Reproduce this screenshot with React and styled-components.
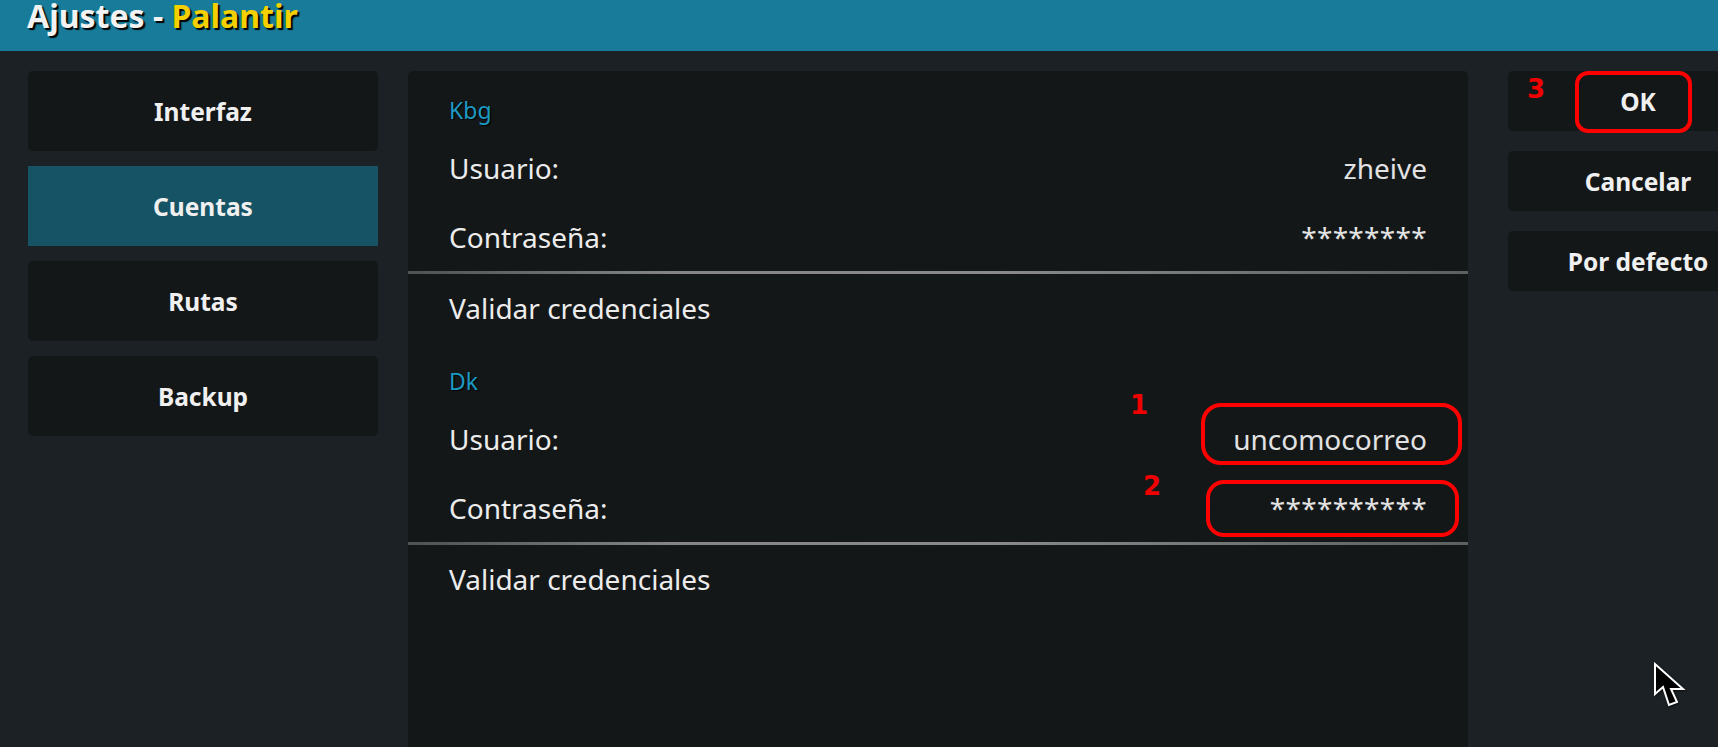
import React from "react";
import styled, { createGlobalStyle } from "styled-components";

const GlobalStyle = createGlobalStyle`
  html, body { margin: 0; padding: 0; background: #1b2124; }
  body { font-family: "Noto Sans", "Open Sans", sans-serif; overflow: hidden; }
  * { box-sizing: border-box; }
`;

const Page = styled.div`
  position: relative;
  width: 1718px;
  height: 747px;
  overflow: hidden;
  background: #1b2124;
`;

const Header = styled.header`
  height: 51px;
  background: #177b99;
  display: flex;
  align-items: flex-start;
  padding-left: 27px;
`;

const Title = styled.h1`
  margin: 0;
  font-size: 32px;
  font-weight: 700;
  line-height: 1;
  color: #f2f2f2;
  text-shadow: 2px 2px 1px #000;
  span { color: #f5d000; }
`;

const Body = styled.main`
  display: flex;
  padding: 20px 0 0 28px;
  height: 696px;
`;

const Sidebar = styled.nav`
  width: 350px;
  flex: none;
  display: flex;
  flex-direction: column;
  gap: 15px;
`;

const SideButton = styled.div`
  height: 80px;
  border-radius: ${(p) => (p.$active ? "0" : "5px")};
  background: ${(p) => (p.$active ? "#165465" : "#141718")};
  display: flex;
  align-items: center;
  justify-content: center;
  color: #f0f0f0;
  font-weight: 700;
  font-size: 24.5px;
`;

const Panel = styled.section`
  width: 1060px;
  flex: none;
  margin-left: 30px;
  background: #141718;
  border-radius: 5px 5px 0 0;
  height: 100%;
`;

const CategoryRow = styled.div`
  height: 62px;
  padding: 16px 41px 0;
  display: flex;
  align-items: center;
  color: #1c9ac3;
  font-size: 23px;
  text-shadow: 1px 1px 1px #000;
`;

const SettingRow = styled.div`
  height: ${(p) => (p.$short ? "68px" : "70px")};
  padding: 0 41px;
  display: flex;
  align-items: center;
  justify-content: space-between;
  color: #ececec;
  font-size: 28px;
`;

const Value = styled.span`
  color: #e2e2e2;
  letter-spacing: ${(p) => (p.$masked ? "0.3px" : "0")};
`;

const Divider = styled.div`
  height: 3px;
  background: linear-gradient(90deg, #4f5252 0%, #858585 25%, #8a8a8a 55%, #5d6060 100%);
`;

const Actions = styled.aside`
  width: 260px;
  flex: none;
  margin-left: 40px;
  display: flex;
  flex-direction: column;
  gap: 20px;
`;

const ActionButton = styled.div`
  height: 60px;
  border-radius: 5px;
  background: #141718;
  display: flex;
  align-items: center;
  justify-content: center;
  color: #f0f0f0;
  font-weight: 700;
  font-size: 24.5px;
`;

const Mark = styled.div`
  position: absolute;
  left: ${(p) => p.$x}px;
  top: ${(p) => p.$y}px;
  width: ${(p) => p.$w}px;
  height: ${(p) => p.$h}px;
  border: 4px solid #ff0000;
  border-radius: ${(p) => p.$r}px;
  pointer-events: none;
`;

const Num = styled.div`
  position: absolute;
  left: ${(p) => p.$x}px;
  top: ${(p) => p.$y}px;
  font-family: "DejaVu Sans", sans-serif;
  font-weight: 700;
  font-size: 26px;
  line-height: 1;
  color: #f00000;
`;

const Cursor = styled.svg`
  position: absolute;
  left: 1653px;
  top: 662px;
  filter: drop-shadow(1px 1px 1px rgba(0,0,0,0.6));
`;

function Group({ name, user, pass }) {
  return (
    <>
      <CategoryRow>{name}</CategoryRow>
      <SettingRow>
        <span>Usuario:</span>
        <Value>{user}</Value>
      </SettingRow>
      <SettingRow $short>
        <span>Contraseña:</span>
        <Value $masked>{pass}</Value>
      </SettingRow>
      <Divider />
      <SettingRow $short>
        <span>Validar credenciales</span>
      </SettingRow>
    </>
  );
}

export default function App() {
  return (
    <Page>
      <GlobalStyle />
      <Header>
        <Title>
          Ajustes - <span>Palantir</span>
        </Title>
      </Header>
      <Body>
        <Sidebar>
          <SideButton>Interfaz</SideButton>
          <SideButton $active>Cuentas</SideButton>
          <SideButton>Rutas</SideButton>
          <SideButton>Backup</SideButton>
        </Sidebar>
        <Panel>
          <Group name="Kbg" user="zheive" pass="********" />
          <Group name="Dk" user="uncomocorreo" pass="**********" />
        </Panel>
        <Actions>
          <ActionButton>OK</ActionButton>
          <ActionButton>Cancelar</ActionButton>
          <ActionButton>Por defecto</ActionButton>
        </Actions>
      </Body>

      <Num $x={1130} $y={392}>1</Num>
      <Mark $x={1201} $y={403} $w={261} $h={62} $r={20} />
      <Num $x={1143} $y={473}>2</Num>
      <Mark $x={1206} $y={480} $w={253} $h={57} $r={18} />
      <Num $x={1527} $y={76}>3</Num>
      <Mark $x={1575} $y={71} $w={117} $h={62} $r={13} />

      <Cursor width="34" height="48" viewBox="0 0 34 48">
        <polygon
          points="2,2 2,32 10,25 16,43 24,40 18,27 30,27"
          fill="#000"
          stroke="#fff"
          strokeWidth="2"
          strokeLinejoin="miter"
        />
      </Cursor>
    </Page>
  );
}
